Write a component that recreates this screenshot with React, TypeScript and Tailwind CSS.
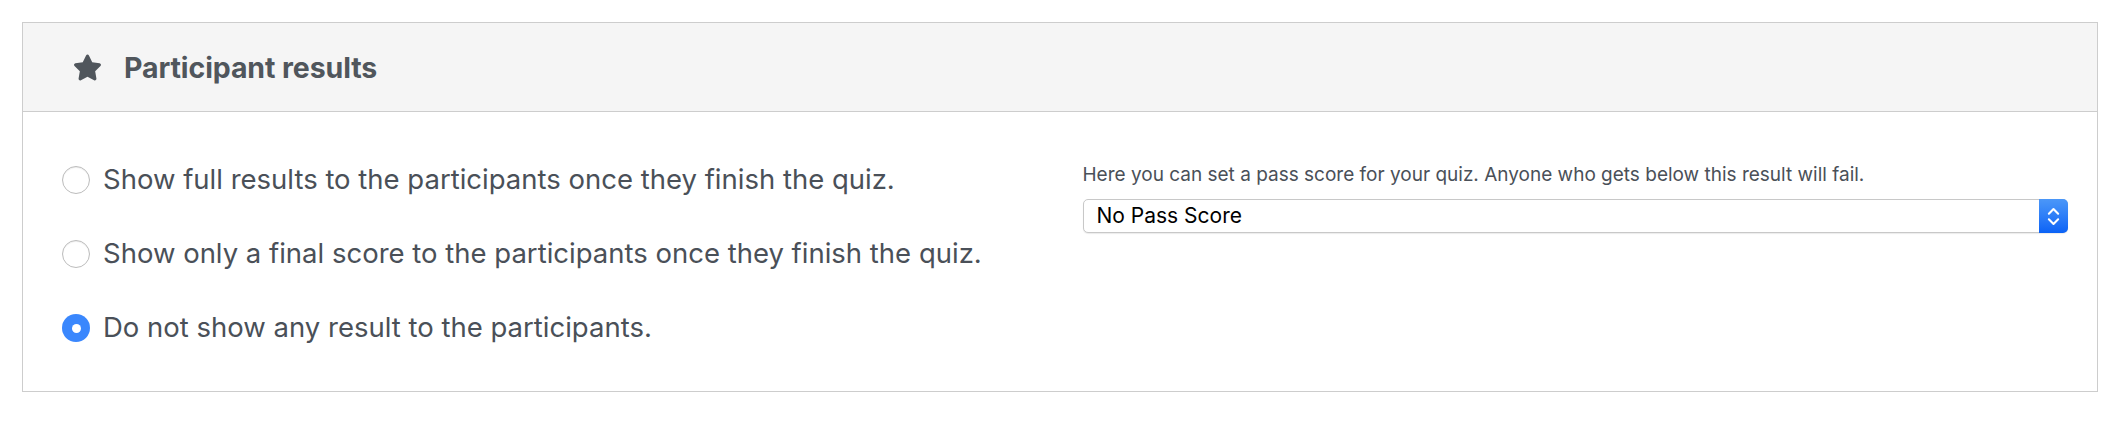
import { useState } from "react";

const options = [
  "Show full results to the participants once they finish the quiz.",
  "Show only a final score to the participants once they finish the quiz.",
  "Do not show any result to the participants.",
];

const Star = () => (
  <svg viewBox="0 0 576 512" className="w-[29px] h-[29px] fill-[#50565c] shrink-0">
    <path d="M259.3 17.8L194 150.2 47.9 171.5c-26.2 3.8-36.7 36.1-17.7 54.6l105.7 103-25 145.5c-4.5 26.3 23.2 46 46.4 33.7L288 439.6l130.7 68.7c23.2 12.2 50.9-7.4 46.4-33.7l-25-145.5 105.7-103c19-18.5 8.5-50.8-17.7-54.6L382 150.2 316.7 17.8c-11.7-23.6-45.6-23.9-57.4 0z" />
  </svg>
);

const Radio = ({ checked }: { checked: boolean }) =>
  checked ? (
    <span className="w-[28px] h-[28px] rounded-full bg-[#3a87fd] flex items-center justify-center shrink-0">
      <span className="w-[9px] h-[9px] rounded-full bg-white" />
    </span>
  ) : (
    <span className="w-[28px] h-[28px] rounded-full bg-white border border-[#bcbcbc] shadow-[inset_0_1px_1px_rgba(0,0,0,0.07)] shrink-0" />
  );

export default function App() {
  const [selected, setSelected] = useState(2);

  return (
    <div className="pt-[22px] pb-[27px] pl-[22px] pr-[30px] bg-white font-['Inter',sans-serif]">
      <div className="border border-[#cdcdcd]">
        <div className="h-[89px] bg-[#f5f5f5] border-b border-[#cdcdcd] flex items-center pl-[50px] gap-[22px]">
          <Star />
          <h2 className="pt-[3px] text-[28.5px] font-bold text-[#50565c] tracking-[-0.1px]">Participant results</h2>
        </div>

        <div className="grid grid-cols-2 gap-x-[44px] pl-[30px] pr-[29px] pt-[31px] pb-[26px]">
          <div className="flex flex-col">
            {options.map((label, i) => (
              <label
                key={i}
                onClick={() => setSelected(i)}
                className="h-[74px] flex items-center gap-[13px] pl-[9px] cursor-pointer"
              >
                <Radio checked={selected === i} />
                <span className="text-[27.5px] text-[#4a5058] whitespace-nowrap">{label}</span>
              </label>
            ))}
          </div>

          <div className="pt-[19px]">
            <p className="text-[19px] leading-[26px] text-[#4a5058] whitespace-nowrap">
              Here you can set a pass score for your quiz. Anyone who gets below this result will fail.
            </p>
            <div className="mt-[11px] h-[34px] flex rounded-[5px] border border-[#c8c8c8] bg-white shadow-[0_1px_1px_rgba(0,0,0,0.08)]">
              <div className="flex-1 flex items-center pl-[13px] text-[21px] text-black">No Pass Score</div>
              <div className="w-[29px] -my-px -mr-px rounded-r-[5px] bg-gradient-to-b from-[#4b97f8] to-[#0a62f6] flex items-center justify-center">
                <svg viewBox="0 0 14 22" className="w-[13px] h-[21px]" fill="none" stroke="white" strokeWidth="2.2" strokeLinecap="round" strokeLinejoin="round">
                  <path d="M2 8l5-5 5 5" />
                  <path d="M2 14l5 5 5-5" />
                </svg>
              </div>
            </div>
          </div>
        </div>
      </div>
    </div>
  );
}
